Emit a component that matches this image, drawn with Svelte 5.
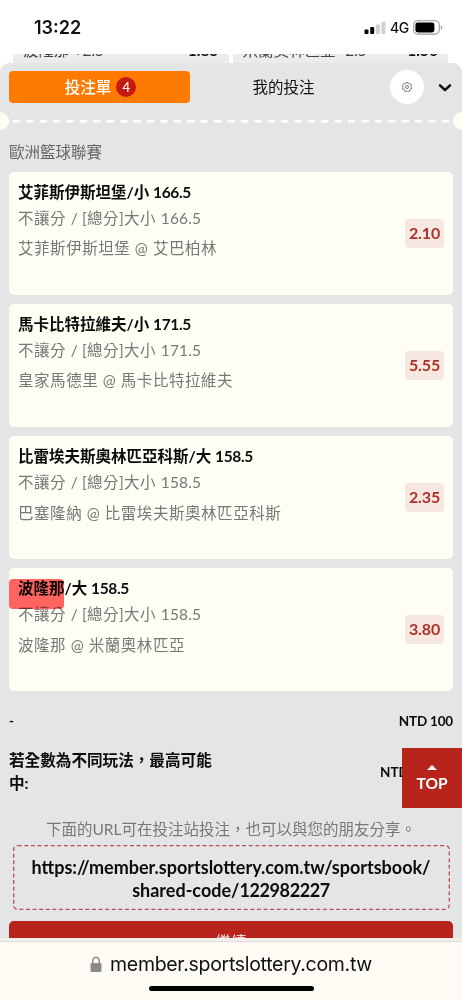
<script lang="ts">
	const league = '歐洲籃球聯賽';
	const url = 'member.sportslottery.com.tw';

	const bets = [
		{pick: '艾菲斯伊斯坦堡/小', total: '166.5', match: '艾菲斯伊斯坦堡 @ 艾巴柏林', odds: '2.10', marked: false},
		{pick: '馬卡比特拉維夫/小', total: '171.5', match: '皇家馬德里 @ 馬卡比特拉維夫', odds: '5.55', marked: false},
		{pick: '比雷埃夫斯奧林匹亞科斯/大', total: '158.5', match: '巴塞隆納 @ 比雷埃夫斯奧林匹亞科斯', odds: '2.35', marked: false},
		{pick: '波隆那/大', total: '158.5', match: '波隆那 @ 米蘭奧林匹亞', odds: '3.80', marked: true}
	];

	let tab = $state('slip');
</script>

<div class="phone">
	<div class="status">
		<span class="time">13:22</span>
		<div class="signal">
			<svg width="22" height="14" viewBox="0 0 22 14">
				<rect x="0.5" y="8.5" width="4" height="4.5" rx="1" />
				<rect x="6.2" y="6" width="4" height="7" rx="1" />
				<rect class="off" x="11.9" y="3.5" width="4" height="9.5" rx="1" />
				<rect class="off" x="17.4" y="0.7" width="4" height="12.3" rx="1" />
			</svg>
			<span class="net">4G</span>
			<svg width="30" height="15" viewBox="0 0 30 15">
				<rect x="0.7" y="0.7" width="25.6" height="13.4" rx="4" fill="none" stroke="#999" stroke-width="1.1" />
				<rect x="2.4" y="2.4" width="19" height="10" rx="2.4" />
				<path d="M27.8 5.2q1.6 .8 1.6 2.3t-1.6 2.3z" fill="#999" />
			</svg>
		</div>
	</div>

	<!-- odds list behind the sheet -->
	<div class="behind">
		<div class="cell"><span>波隆那 +2.5</span><b>1.85</b></div>
		<div class="cell"><span>米蘭奧林匹亞 -2.5</span><b>1.50</b></div>
	</div>

	<div class="sheet">
		<div class="tabs">
			<button class="tab" class:active={tab === 'slip'} onclick={() => tab = 'slip'}>
				<span class="name">投注單</span> <span class="count">4</span>
			</button>
			<button class="tab" class:active={tab === 'mine'} onclick={() => tab = 'mine'}><span class="name">我的投注</span></button>
			<button class="gear" aria-label="設定">
				<svg width="10" height="10" viewBox="0 0 20 20" fill="none" stroke="#555" stroke-width="1.5">
					<path d="M8 1.2h4l.6 2.4 1.8.8 2.2-1.2 2.4 3-1.5 2 .3 1.8 2 1-1 3.4-2.4.2-1.2 1.4.4 2.3-3.4 1.4L10 17.4l-2.2 1.8-3.4-1.4.4-2.3-1.2-1.4-2.4-.2-1-3.4 2-1 .3-1.8-1.5-2 2.4-3 2.2 1.2 1.8-.8z" />
					<circle cx="10" cy="10" r="3" />
				</svg>
			</button>
			<svg class="chev" width="14" height="10" viewBox="0 0 14 10" fill="none" stroke="#111" stroke-width="2.5" stroke-linecap="round" stroke-linejoin="round">
				<path d="M2 3.3l5 4.7 5-4.7" />
			</svg>
		</div>

		<div class="perf">
			<i></i>
			<svg width="436" height="4" viewBox="0 0 436 4">
				<line x1="0" y1="2.3" x2="436" y2="2.3" stroke="#fff" stroke-width="2.6" stroke-dasharray="7.2 6.2" />
			</svg>
			<i></i>
		</div>

		<div class="league">{league}</div>

		<div class="bets">
			{#each bets as bet}
				<div class="bet">
					<div class="info">
						<div class="pick">{bet.pick} <span class="num">{bet.total}</span></div>
						<div class="line">不讓分 <span class="num">/ [</span>總分<span class="num">]</span>大小 <span class="num">{bet.total}</span></div>
						<div class="line match">{bet.match}</div>
					</div>
					<span class="odds">{bet.odds}</span>
					{#if bet.marked}<div class="marker"></div>{/if}
				</div>
			{/each}
		</div>

		<div class="sum first"><span>-</span><span>NTD 100</span></div>
		<div class="sum second">
			<span class="label">若全數為不同玩法，最高可能中:</span>
			<span class="win">NTD</span>
			<button class="top">
				<svg width="10" height="5" viewBox="0 0 10 5"><path d="M0 5l5-5 5 5z" fill="#fff" /></svg>
				TOP
			</button>
		</div>

		<div class="note">下面的URL可在投注站投注，也可以與您的朋友分享。</div>
		<div class="share">
			<svg width="437" height="65" viewBox="0 0 437 65">
				<rect x="0.7" y="0.7" width="435.6" height="63.6" rx="4" fill="none" stroke="#b9504c" stroke-width="1.3" stroke-dasharray="4 2.6" />
			</svg>
			https://member.sportslottery.com.tw/sportsbook/<br />shared-code/<span class="code">122982227</span>
		</div>
		<div class="go"><span>繼續</span></div>
		<div class="edge"></div>
	</div>

	<div class="browser">
		<div class="address">
			<svg width="12" height="17" viewBox="0 0 12 17">
				<path d="M2.7 8V4.8a3.3 3.5 0 0 1 6.6 0V8" fill="none" stroke="#8a8a86" stroke-width="1.5" />
				<rect x="0.5" y="7" width="11" height="9" rx="1.6" fill="#8a8a86" />
			</svg>
			<span>{url}</span>
		</div>
		<div class="home"></div>
	</div>
</div>

<style>
:global(body) {
	margin: 0;
	background: #fff;
}

.phone {
	width: 462px;
	height: 1000px;
	display: flex;
	flex-direction: column;
	overflow: hidden;
	font-family: Lato, "Noto Sans CJK TC", sans-serif;
	font-size: 15.5px;
	color: #111;
	background: #fff;
}

button {
	border: 0;
	padding: 0;
	font: inherit;
	color: inherit;
	background: none;
}

svg {
	display: block;
	flex: none;
}

.status {
	display: flex;
	justify-content: space-between;
	flex: none;
	height: 54px;
	box-sizing: border-box;
	padding: 17px 19px 0 34px;
	font-family: Inter, sans-serif;
}

.time {
	font-size: 18px;
	font-weight: 600;
	line-height: 22px;
}

.signal {
	display: flex;
	align-items: center;
	height: 21px;
	gap: 4px;
}

.net {
	width: 19px;
	font-size: 14px;
	letter-spacing: -.4px;
	font-weight: 500;
}

.off {
	fill: #d0d0d0;
}

.behind {
	display: flex;
	flex: none;
	gap: 4px;
	height: 9px;
	padding: 0 14px 0 13px;
	overflow: hidden;
}

.cell {
	display: flex;
	justify-content: space-between;
	flex: 1;
	box-sizing: border-box;
	padding: 0 10px;
	background: #ececec;
	color: #444;
}

.cell span, .cell b {
	height: 20px;
	margin-top: -14px;
	line-height: 20px;
}

.cell b {
	color: #111;
}

.sheet {
	display: flex;
	flex-direction: column;
	flex: none;
	height: 879px;
	box-sizing: border-box;
	padding: 7px 9px 0;
	border-radius: 9px 9px 0 0;
	background: #e4e5e7;
	overflow: hidden;
}

.tabs {
	display: flex;
	align-items: center;
	flex: none;
	height: 34px;
}

.tab {
	display: flex;
	align-items: center;
	justify-content: center;
	gap: 5px;
	width: 181px;
	height: 32px;
	border-radius: 4px;
	margin-right: 3px;
}

.name {
	padding-bottom: 2px;
}

.tab.active {
	padding-left: 2px;
	box-sizing: border-box;
	background: #ff7a00;
	color: #fff;
	font-weight: 500;
}

.count {
	width: 20px;
	height: 20px;
	border-radius: 50%;
	background: #c41a10;
	font-size: 13px;
	line-height: 20px;
}

.gear {
	display: flex;
	align-items: center;
	justify-content: center;
	width: 34px;
	height: 34px;
	margin-left: 13px;
	border-radius: 50%;
	background: #fff;
}

.chev {
	margin-left: 14px;
}

.perf {
	display: flex;
	align-items: center;
	justify-content: space-between;
	flex: none;
	height: 18px;
	margin: 8px -18px 0;
}

.perf i {
	width: 18px;
	height: 18px;
	border-radius: 50%;
	background: #fffdf3;
}

.league {
	flex: none;
	height: 24px;
	margin-top: 10px;
	line-height: 24px;
	color: #666;
}

.bets {
	display: flex;
	flex-direction: column;
	flex: none;
	gap: 9px;
	margin-top: 7.7px;
}

.bet {
	position: relative;
	display: flex;
	align-items: center;
	justify-content: space-between;
	height: 123.2px;
	box-sizing: border-box;
	padding: 0 9px;
	border-radius: 5px;
	background: #fffef5;
}

.info {
	align-self: flex-start;
	padding-top: 8px;
}

.pick {
	height: 25px;
	line-height: 25px;
	font-weight: 700;
	color: #0c0c0c;
}

.pick .num {
	letter-spacing: -.35px;
}

.line {
	height: 26px;
	line-height: 26px;
	letter-spacing: .55px;
	color: #777;
}

.line .num {
	letter-spacing: .2px;
}

.match {
	margin-top: 4.5px;
}

.odds {
	width: 39px;
	height: 29px;
	border-radius: 4px;
	background: #f7e7e1;
	color: #ab3129;
	font-size: 16px;
	font-weight: 700;
	line-height: 28px;
	letter-spacing: -.1px;
	text-align: center;
}

/* hand-drawn highlight over the pick */
.marker {
	position: absolute;
	left: 0;
	top: 11px;
	width: 55px;
	height: 30px;
	border-radius: 4px;
	background: #ff6464;
	mix-blend-mode: multiply;
	filter: blur(.7px);
}

.sum {
	display: flex;
	justify-content: space-between;
	flex: none;
	font-size: 13.5px;
	font-weight: 700;
	color: #0c0c0c;
}

.first {
	height: 20px;
	margin-top: 20px;
	line-height: 20px;
	letter-spacing: -.2px;
}

.second {
	position: relative;
	align-items: center;
	height: 60px;
	margin-top: 17px;
}

.label {
	width: 210px;
	padding-bottom: 13px;
	font-size: 15.6px;
	line-height: 22.5px;
}

.win {
	width: 73px;
	padding-bottom: 12px;
}

.top {
	position: absolute;
	right: -9px;
	top: 0;
	display: flex;
	flex-direction: column;
	align-items: center;
	justify-content: center;
	gap: 3px;
	width: 60px;
	height: 60px;
	padding-top: 1px;
	box-sizing: border-box;
	background: #b7241c;
	color: #fff;
	font-size: 15.5px;
	line-height: 20px;
}

.note {
	flex: none;
	height: 24px;
	margin-top: 9px;
	line-height: 24px;
	text-align: center;
	color: #777;
}

.share {
	position: relative;
	flex: none;
	height: 65px;
	box-sizing: border-box;
	margin: 4px 4px 0;
	padding-top: 11px;
	font-size: 18px;
	font-weight: 700;
	line-height: 22.5px;
	text-align: center;
	white-space: nowrap;
	color: #0c0c0c;
}

.share svg {
	position: absolute;
	left: 0;
	top: 0;
}

.code {
	letter-spacing: -.4px;
}

.go {
	flex: none;
	height: 17px;
	margin-top: 11px;
	border-radius: 5px 5px 0 0;
	background: #b7241c;
	color: #fff;
	text-align: center;
	overflow: hidden;
}

.go span {
	display: block;
	padding-top: 9px;
	line-height: 24px;
}

.edge {
	flex: 1;
	margin: 0 -9px;
	border-bottom: 1px solid #dcdcdc;
	background: #f3efeb;
}

.browser {
	display: flex;
	flex-direction: column;
	align-items: center;
	flex: none;
	height: 58px;
	background: #fdfbf4;
}

.address {
	display: flex;
	align-items: center;
	gap: 8px;
	height: 44px;
	font-family: Inter, sans-serif;
	font-size: 19.5px;
	letter-spacing: -.3px;
}

.home {
	width: 165px;
	height: 5px;
	border-radius: 3px;
	background: #000;
}
</style>
